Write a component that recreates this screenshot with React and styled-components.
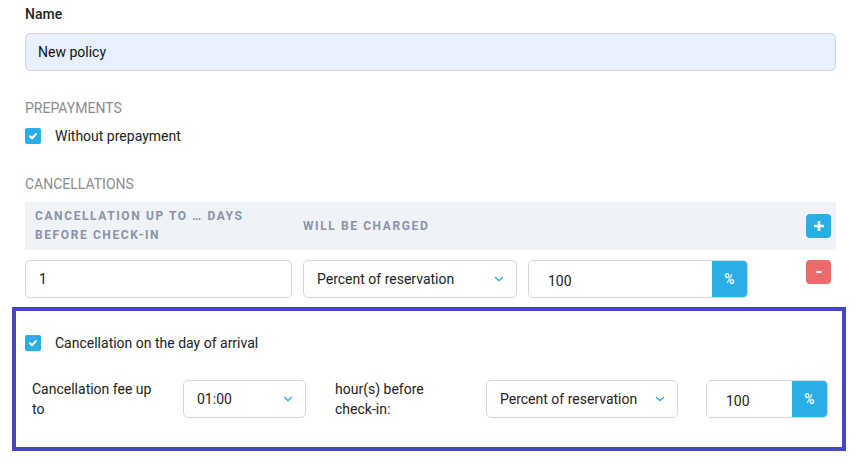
import React from "react";
import styled, { createGlobalStyle } from "styled-components";

const Global = createGlobalStyle`
  html, body { margin: 0; padding: 0; background: #fff; }
  body { font-family: Roboto, "Liberation Sans", Arial, sans-serif; color: #222; font-size: 14px; }
  * { box-sizing: border-box; }
`;

const Page = styled.div`
  width: 862px;
  padding: 4px 26px 0 25px;
  display: flex;
  flex-direction: column;
`;

const FieldLabel = styled.div`
  font-size: 14px;
  font-weight: 500;
  line-height: 20px;
  color: #222;
`;

const NameInput = styled.div`
  margin-top: 9px;
  height: 38px;
  border: 1px solid #cfd4dc;
  border-radius: 5px;
  background: #e8f0fe;
  padding: 0 12px;
  display: flex;
  align-items: center;
  font-size: 14px;
  color: #111;
`;

const SectionTitle = styled.div`
  margin-top: ${(p) => p.$mt}px;
  font-size: 14px;
  line-height: 20px;
  color: #8c8c8c;
  text-transform: uppercase;
`;

const CheckRow = styled.div`
  margin-top: ${(p) => p.$mt || 0}px;
  display: flex;
  align-items: center;
  gap: 14px;
  height: 20px;
  font-size: 14px;
  color: #222;
`;

const Check = styled.span`
  width: 16px;
  height: 16px;
  border-radius: 2px;
  background: #29aee6;
  display: inline-flex;
  align-items: center;
  justify-content: center;
  flex: none;
`;

const CheckBox = () => (
  <Check>
    <svg width="10" height="10" viewBox="0 0 10 10">
      <path d="M2 5.2 L4.1 7.2 L8 3" fill="none" stroke="#fff" strokeWidth="2" strokeLinecap="round" strokeLinejoin="round" />
    </svg>
  </Check>
);

const TableHead = styled.div`
  margin-top: 8px;
  height: 48px;
  background: #eff2f6;
  padding: 0 5px 0 10px;
  display: grid;
  grid-template-columns: 257px 214px 220px 1fr;
  column-gap: 11px;
  align-items: center;
`;

const HeadCell = styled.div`
  font-size: 12px;
  font-weight: 700;
  line-height: 19px;
  letter-spacing: 1.6px;
  color: #8993a6;
  text-transform: uppercase;
  padding-right: 8px;
`;

const TableRow = styled.div`
  margin-top: 10px;
  padding-right: 5px;
  display: grid;
  grid-template-columns: 267px 214px 220px 1fr;
  column-gap: 11px;
  align-items: start;
`;

const TextBox = styled.div`
  height: 38px;
  border: 1px solid #d3d7de;
  border-radius: 5px;
  background: #fff;
  padding: 0 13px;
  display: flex;
  align-items: center;
  font-size: 14px;
  color: #222;
`;

const SelectBox = styled(TextBox)`
  justify-content: space-between;
  padding: 0 12px 0 13px;
  flex: none;
`;

const Chevron = () => (
  <svg width="10" height="6" viewBox="0 0 10 6">
    <path d="M1 1 L5 4.6 L9 1" fill="none" stroke="#29aee6" strokeWidth="1.3" />
  </svg>
);

const Select = ({ value, w }) => (
  <SelectBox style={w ? { width: w } : undefined}>
    <span>{value}</span>
    <Chevron />
  </SelectBox>
);

const Group = styled.div`
  height: 38px;
  display: flex;
  border: 1px solid #d3d7de;
  border-radius: 5px;
  overflow: hidden;
  flex: none;
  width: ${(p) => (p.$w ? `${p.$w}px` : "auto")};
`;

const GroupInput = styled.div`
  flex: 1;
  display: flex;
  align-items: center;
  padding: 3px 0 0 19px;
  font-size: 14px;
  color: #222;
  background: #fff;
`;

const Addon = styled.div`
  width: 35px;
  background: #29aee6;
  color: #fff;
  display: flex;
  align-items: center;
  justify-content: center;
  font-size: 14px;
  font-weight: 500;
`;

const IconBtn = styled.div`
  justify-self: end;
  width: 25px;
  height: 24px;
  border-radius: 4px;
  background: ${(p) => (p.$danger ? "#ec6a6a" : "#29aee6")};
  display: flex;
  align-items: center;
  justify-content: center;
`;

const Highlight = styled.div`
  margin: 9px -10px 0 -13px;
  border: 4px solid #4248c8;
  padding: 22px 14px 28px 9px;
  display: flex;
  flex-direction: column;
`;

const FeeRow = styled.div`
  margin-top: 26px;
  display: flex;
  align-items: center;
`;

const FeeText = styled.div`
  width: ${(p) => p.$w}px;
  padding-left: ${(p) => p.$pl || 0}px;
  padding-right: ${(p) => p.$pr || 0}px;
  font-size: 14px;
  line-height: 20px;
  color: #222;
  flex: none;
`;

export default function App() {
  return (
    <>
      <Global />
      <Page>
        <FieldLabel>Name</FieldLabel>
        <NameInput>New policy</NameInput>

        <SectionTitle $mt={27}>Prepayments</SectionTitle>
        <CheckRow $mt={8}>
          <CheckBox />
          <span>Without prepayment</span>
        </CheckRow>

        <SectionTitle $mt={28}>Cancellations</SectionTitle>
        <TableHead>
          <HeadCell>Cancellation up to … days before check-in</HeadCell>
          <HeadCell>Will be charged</HeadCell>
          <div />
          <IconBtn>
            <svg width="12" height="12" viewBox="0 0 12 12">
              <path d="M6 1 V11 M1 6 H11" stroke="#fff" strokeWidth="2.6" />
            </svg>
          </IconBtn>
        </TableHead>
        <TableRow>
          <TextBox>1</TextBox>
          <Select value="Percent of reservation" />
          <Group>
            <GroupInput>100</GroupInput>
            <Addon>%</Addon>
          </Group>
          <IconBtn $danger>
            <svg width="8" height="4" viewBox="0 0 8 4">
              <path d="M1.5 2 H6.5" stroke="#fff" strokeWidth="2.2" />
            </svg>
          </IconBtn>
        </TableRow>

        <Highlight>
          <CheckRow>
            <CheckBox />
            <span>Cancellation on the day of arrival</span>
          </CheckRow>
          <FeeRow>
            <FeeText $w={158} $pl={7} $pr={24}>Cancellation fee up to</FeeText>
            <Select value="01:00" w={123} />
            <FeeText $w={180} $pl={29} $pr={40}>hour(s) before check-in:</FeeText>
            <Select value="Percent of reservation" w={192} />
            <FeeText $w={28} />
            <Group $w={122}>
              <GroupInput>100</GroupInput>
              <Addon>%</Addon>
            </Group>
          </FeeRow>
        </Highlight>
      </Page>
    </>
  );
}
